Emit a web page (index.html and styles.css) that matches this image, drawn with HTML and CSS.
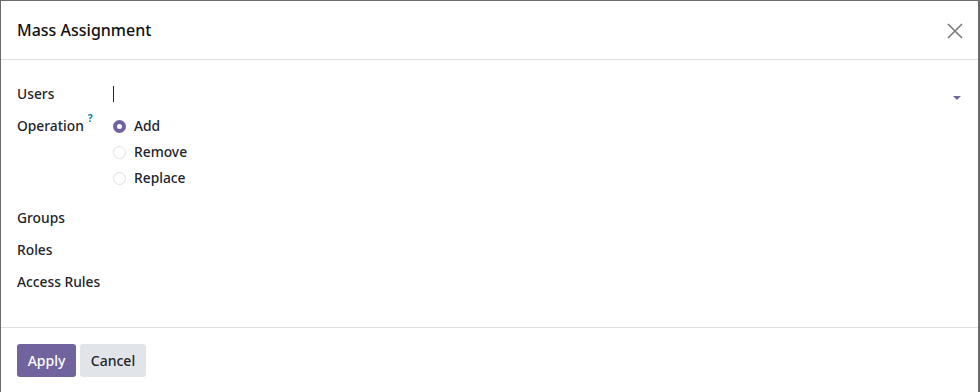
FILE: index.html
```html
<!DOCTYPE html>
<html lang="en">
<head>
    <meta charset="UTF-8">
    <meta name="viewport" content="width=device-width, initial-scale=1.0">
    <title>Mass Assignment</title>
    <link rel="stylesheet" href="styles.css">
</head>
<body>
    <div class="modal">
        <div class="modal-header">
            <h4 class="modal-title">Mass Assignment</h4>
            <button type="button" class="btn-close" aria-label="Close">
                <svg width="16" height="16" viewBox="0 0 16 16">
                    <path d="M1 1 L15 15 M15 1 L1 15" stroke="#7a7a7a" stroke-width="1.6" fill="none"/>
                </svg>
            </button>
        </div>

        <div class="modal-body">
            <div class="field">
                <label class="field-label">Users</label>
                <div class="field-value many2many">
                    <span class="caret"></span>
                    <span class="dropdown-arrow"></span>
                </div>
            </div>

            <div class="field">
                <label class="field-label">Operation<sup class="help">?</sup></label>
                <div class="field-value radios">
                    <label class="radio"><span class="radio-dot checked"></span>Add</label>
                    <label class="radio"><span class="radio-dot"></span>Remove</label>
                    <label class="radio"><span class="radio-dot"></span>Replace</label>
                </div>
            </div>

            <div class="field simple first">
                <label class="field-label">Groups</label>
            </div>
            <div class="field simple">
                <label class="field-label">Roles</label>
            </div>
            <div class="field simple">
                <label class="field-label">Access Rules</label>
            </div>
        </div>

        <div class="modal-footer">
            <button type="button" class="btn btn-primary">Apply</button>
            <button type="button" class="btn btn-secondary">Cancel</button>
        </div>
    </div>
</body>
</html>
```

FILE: styles.css
```css
body {
    font-family: "Noto Sans", "Open Sans", sans-serif;
    margin: 0;
    padding: 0;
    background-color: #6b6b6b;
    color: #212529;
    font-size: 13.8px;
}

.modal {
    width: 977px;
    height: 391px;
    background-color: #fff;
    border-top: 1px solid #6b6b6b;
    border-left: 1px solid #6b6b6b;
    display: flex;
    flex-direction: column;
}

.modal-header {
    height: 58px;
    border-bottom: 1px solid #dee2e6;
    display: flex;
    align-items: center;
    justify-content: space-between;
    padding: 0 15px 0 16px;
}

.modal-title {
    margin: 0;
    font-size: 16px;
    font-weight: 500;
    color: #111;
}

.btn-close {
    background: none;
    border: none;
    padding: 0;
    width: 16px;
    height: 16px;
    cursor: pointer;
    margin-top: 2px;
}

.modal-body {
    flex: 1;
    padding: 24px 16px 0 16px;
}

.field {
    display: flex;
    align-items: flex-start;
}

.field-label {
    width: 95px;
    font-weight: 500;
    line-height: 20px;
    flex-shrink: 0;
}

.help {
    color: #017e84;
    font-size: 10px;
    font-weight: 700;
    margin-left: 4px;
    vertical-align: top;
    line-height: 10px;
    position: relative;
    top: -3px;
}

.field-value {
    flex: 1;
}

.many2many {
    height: 22px;
    display: flex;
    align-items: center;
    justify-content: space-between;
    margin-bottom: 10px;
}

.caret {
    width: 1px;
    height: 16px;
    background-color: #222;
    margin-left: 1px;
    margin-top: -2px;
}

.dropdown-arrow {
    width: 0;
    height: 0;
    border-left: 4px solid transparent;
    border-right: 4px solid transparent;
    border-top: 4px solid #71639e;
    margin-right: 1px;
    margin-top: 5px;
}

.radios {
    display: flex;
    flex-direction: column;
    gap: 6px;
}

.radio {
    display: flex;
    align-items: center;
    line-height: 20px;
    font-weight: 500;
}

.radio-dot {
    width: 13px;
    height: 13px;
    border-radius: 50%;
    border: 1px solid #dee2e6;
    box-sizing: border-box;
    margin: 0 8px 0 1px;
}

.radio-dot.checked {
    border: 4px solid #71639e;
    background-color: #fff;
}

.simple {
    height: 32px;
    align-items: center;
}

.simple.first {
    margin-top: 14px;
}

.modal-footer {
    height: 65px;
    border-top: 1px solid #dee2e6;
    display: flex;
    align-items: flex-start;
    padding: 16px 16px 0 16px;
    gap: 4px;
    box-sizing: border-box;
}

.btn {
    font-family: inherit;
    font-size: 14px;
    font-weight: 500;
    height: 33px;
    padding: 0 14px;
    border: none;
    border-radius: 3px;
    cursor: pointer;
}

.btn-primary {
    background-color: #71639e;
    color: #fff;
    width: 59px;
    padding: 0;
}

.btn-secondary {
    background-color: #e1e4e8;
    color: #212529;
    width: 66px;
    padding: 0;
}
```
